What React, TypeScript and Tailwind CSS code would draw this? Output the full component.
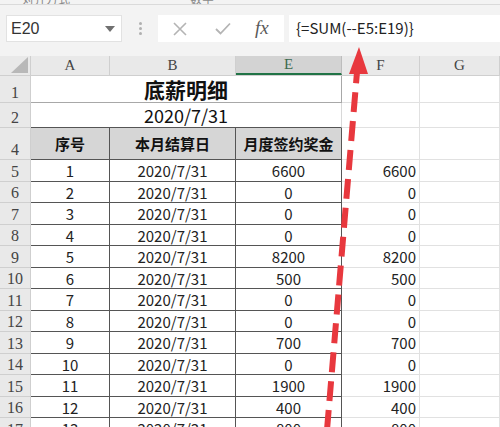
import React from 'react';

const cellFont = { fontFamily: '"Noto Sans CJK SC", "Liberation Sans", sans-serif' };
const hdrFont = { fontFamily: '"Liberation Serif", "DejaVu Serif", serif' };

const rows = [
  [5, '1', '6600'],
  [6, '2', '0'],
  [7, '3', '0'],
  [8, '4', '0'],
  [9, '5', '8200'],
  [10, '6', '500'],
  [11, '7', '0'],
  [12, '8', '0'],
  [13, '9', '700'],
  [14, '10', '0'],
  [15, '11', '1900'],
  [16, '12', '400'],
  [17, '13', '800'],
];

const grid = 'grid grid-cols-[31px_79px_126px_106px_78px_80px]';

function RowHead({ n, h }: { n: number | string; h: string }) {
  return (
    <div
      className={`${h} flex items-end justify-center pb-[1px] bg-[#e9e9e9] border-b border-r border-[#cfcfcf] text-[16px] leading-none text-[#444]`}
      style={hdrFont}
    >
      {n}
    </div>
  );
}

export default function App() {
  return (
    <div className="relative w-[500px] h-[427px] overflow-hidden bg-white">
      {/* ribbon edge */}
      <div className="h-[5px] bg-[#f3f3f3] border-b border-[#dadada] overflow-hidden">
        <div className="flex gap-[120px] pl-[22px] -mt-[10px] text-[12px] text-[#8a8a8a]" style={cellFont}>
          <span>对齐方式</span>
          <span>数字</span>
        </div>
      </div>

      {/* formula bar */}
      <div className="h-[51px] bg-[#f3f3f3] flex items-start pt-[10px]">
        <div className="ml-[6px] w-[116px] h-[27px] bg-white border border-[#e2e2e2] flex items-center justify-between pl-[4px] pr-[6px]">
          <span className="text-[16px] text-[#333]" style={{ fontFamily: '"Liberation Sans", sans-serif' }}>E20</span>
          <svg width="10" height="6" viewBox="0 0 10 6"><path d="M0 0h10L5 6z" fill="#707070" /></svg>
        </div>
        <div className="w-[36px] h-[27px] flex flex-col items-center justify-center gap-[2px]">
          <span className="w-[3px] h-[3px] rounded-full bg-[#b0b0b0]" />
          <span className="w-[3px] h-[3px] rounded-full bg-[#b0b0b0]" />
          <span className="w-[3px] h-[3px] rounded-full bg-[#b0b0b0]" />
        </div>
        <div className="w-[126px] h-[27px] bg-white flex items-center">
          <svg className="ml-[15px]" width="14" height="14" viewBox="0 0 14 14">
            <path d="M1 1L13 13M13 1L1 13" stroke="#b4b4b4" strokeWidth="1.6" />
          </svg>
          <svg className="ml-[28px]" width="16" height="13" viewBox="0 0 16 13">
            <path d="M1 7L5.5 11.5L15 1.5" stroke="#b4b4b4" strokeWidth="1.8" fill="none" />
          </svg>
          <span className="ml-[24px] text-[19px] italic text-[#5a5a5a]" style={hdrFont}>fx</span>
        </div>
        <div className="ml-[5px] flex-1 h-[27px] bg-white flex items-center pl-[7px]">
          <span className="text-[15px] text-[#222]" style={cellFont}>{'{=SUM(--E5:E19)}'}</span>
        </div>
      </div>

      {/* column headers */}
      <div className={`${grid} h-[20px] bg-[#e9e9e9] border-b border-[#cfcfcf]`}>
        <div className="relative border-r border-[#cfcfcf]">
          <svg className="absolute right-[2px] bottom-[2px]" width="17" height="16" viewBox="0 0 17 16">
            <path d="M17 0V16H0z" fill="#b8b8b8" />
          </svg>
        </div>
        {['A', 'B'].map(c => (
          <div key={c} className="flex items-center justify-center border-r border-[#cfcfcf] text-[15px] leading-none text-[#444]" style={hdrFont}>{c}</div>
        ))}
        <div className="flex items-center justify-center bg-[#d3d3d3] border-b-2 border-[#217346] border-r border-r-[#bdbdbd] text-[15px] leading-none text-[#3d6a4f]" style={hdrFont}>E</div>
        {['F', 'G'].map(c => (
          <div key={c} className="flex items-center justify-center border-r border-[#cfcfcf] text-[15px] leading-none text-[#444]" style={hdrFont}>{c}</div>
        ))}
      </div>

      {/* row 1 */}
      <div className={grid}>
        <RowHead n={1} h="h-[27px]" />
        <div className="col-span-3 h-[27px] flex items-center justify-center border-b border-r border-[#a8a8a8] text-[21px] leading-[23px] font-bold text-[#111]" style={cellFont}>底薪明细</div>
        <div className="border-b border-r border-[#e1e1e1]" />
        <div className="border-b border-r border-[#e1e1e1]" />
      </div>

      {/* row 2 */}
      <div className={grid}>
        <RowHead n={2} h="h-[25px]" />
        <div className="col-span-3 h-[25px] flex items-center justify-center border-b border-[#555] border-r border-r-[#d8d8d8] text-[18px] leading-[22px] text-[#111]" style={cellFont}>2020/7/31</div>
        <div className="border-b border-r border-[#e1e1e1]" />
        <div className="border-b border-r border-[#e1e1e1]" />
      </div>

      {/* row 4 header */}
      <div className={grid}>
        <RowHead n={4} h="h-[32px]" />
        {['序号', '本月结算日', '月度签约奖金'].map(t => (
          <div key={t} className="h-[32px] flex items-center justify-center bg-[#d6d6d6] border-b border-r border-[#555] text-[15px] leading-[20px] font-bold text-[#111]" style={cellFont}>{t}</div>
        ))}
        <div className="border-b border-r border-[#e1e1e1]" />
        <div className="border-b border-r border-[#e1e1e1]" />
      </div>

      {/* data */}
      {rows.map(([n, a, e]) => (
        <div key={n} className={`${grid} h-[21.5px]`}>
          <RowHead n={n} h="h-[21.5px]" />
          <div className="h-[21.5px] flex items-center justify-center pt-[2px] border-b border-r border-[#555] text-[15px] leading-[18px] text-[#222]" style={cellFont}>{a}</div>
          <div className="h-[21.5px] flex items-center justify-center pt-[2px] border-b border-r border-[#555] text-[15px] leading-[18px] text-[#222]" style={cellFont}>2020/7/31</div>
          <div className="h-[21.5px] flex items-center justify-center pt-[2px] border-b border-r border-[#555] text-[15px] leading-[18px] text-[#222]" style={cellFont}>{e}</div>
          <div className="h-[21.5px] flex items-center justify-end pt-[2px] pr-[3px] border-b border-r border-[#e1e1e1] text-[15px] leading-[18px] text-[#222]" style={cellFont}>{e}</div>
          <div className="h-[21.5px] border-b border-r border-[#e1e1e1]" />
        </div>
      ))}

      {/* red annotation arrow */}
      <svg className="absolute inset-0 pointer-events-none" width="500" height="427" viewBox="0 0 500 427">
        <line x1="327" y1="430" x2="357" y2="72" stroke="#e8383e" strokeWidth="6" strokeDasharray="20 9" />
        <path d="M359 47L349 74L368 74z" fill="#e8383e" />
      </svg>
    </div>
  );
}
